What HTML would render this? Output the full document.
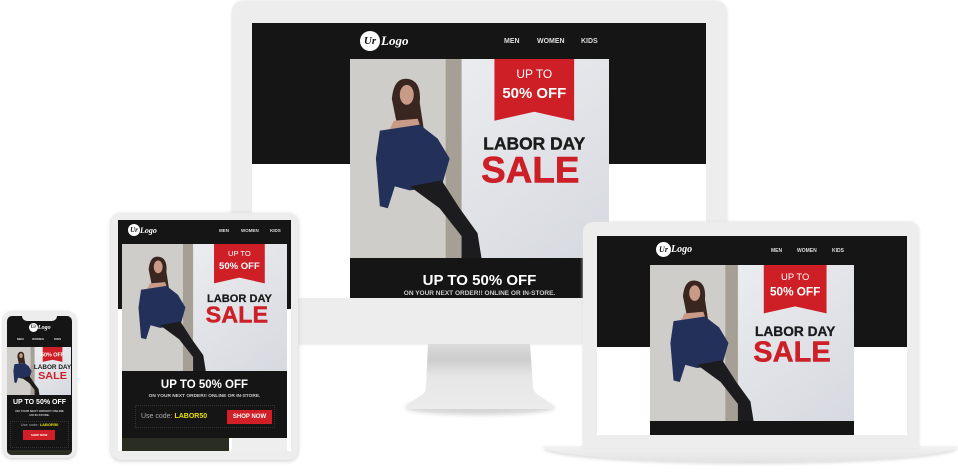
<!DOCTYPE html>
<html><head><meta charset="utf-8"><style>
*{margin:0;padding:0;box-sizing:border-box}
body{width:958px;height:474px;background:#fff;position:relative;overflow:hidden;font-family:"Liberation Sans",sans-serif}
.a{position:absolute}
.bz{background:#ededed;border-radius:10px}
.blk{background:#151515}
.nav{position:absolute;color:#ddd;font-weight:bold;white-space:nowrap}
.logo{position:absolute;display:flex;align-items:center}
.logo .c{background:#fff;border-radius:50%;color:#111;font-weight:bold;font-style:italic;display:flex;align-items:center;justify-content:center;font-family:"Liberation Serif",serif}
.logo .t{color:#fff;font-style:italic;font-family:"Liberation Serif",serif;font-weight:bold}
.ct{position:absolute;text-align:center;color:#fff;font-weight:bold;white-space:nowrap}
svg{display:block;position:absolute}
</style></head><body>

<!-- MONITOR -->
<div class="a" style="left:405px;top:400px;width:150px;height:15px;border-radius:50%;background:#d6d6d6;filter:blur(2px)"></div>
<svg style="left:400px;top:340px" width="160" height="75" viewBox="0 0 160 75">
<defs><linearGradient id="st" x1="0" y1="0" x2="0" y2="1"><stop offset="0" stop-color="#dcdcdc"/><stop offset=".25" stop-color="#cdcdcd"/><stop offset=".5" stop-color="#e6e6e6"/><stop offset="1" stop-color="#ececec"/></linearGradient></defs>
<path d="M28 3 L130 3 L133 47 Q134 53 140 56 L150 63 Q155 67 150 69 L10 69 Q4 67 9 63 L20 56 Q26 53 26 47 Z" fill="url(#st)"/>
</svg>
<div class="a bz" style="left:232px;top:1px;width:495px;height:343px;border-radius:12px;box-shadow:0 0 3px #ddd"></div>
<div class="a" style="left:252px;top:23px;width:454px;height:275px;background:#fff"></div>
<div class="a blk" style="left:252px;top:23px;width:454px;height:141px"></div>
<div class="logo" style="left:360px;top:31px"><div class="c" style="width:20px;height:20px;font-size:11px">Ur</div><div class="t" style="font-size:13px;margin-left:1px">Logo</div></div>
<div class="nav" style="left:504px;top:38px;font-size:7px">MEN</div>
<div class="nav" style="left:537px;top:38px;font-size:7px">WOMEN</div>
<div class="nav" style="left:581px;top:38px;font-size:7px">KIDS</div>
<svg style="left:350px;top:59px" width="259" height="199" viewBox="0 0 260 200" preserveAspectRatio="none">
<defs><linearGradient id="rg" x1="0" y1="0" x2="1" y2="1"><stop offset="0" stop-color="#f0f1f4"/><stop offset="1" stop-color="#d6d9df"/></linearGradient></defs>
<rect width="260" height="200" fill="url(#rg)"/><rect width="112" height="200" fill="#cfcdc9"/><rect x="96" width="16" height="200" fill="#a59f96"/>
<path d="M42 40 Q44 18 58 20 Q72 22 70 44 L74 70 L62 66 L48 70 Z" fill="#3a2620"/><ellipse cx="57" cy="36" rx="7" ry="10" fill="#c99a86"/>
<polygon points="44,62 68,60 72,72 38,74" fill="#c99a86"/>
<polygon points="30,72 70,66 88,80 100,100 92,128 60,132 45,128 38,150 30,148 26,100" fill="#23305a"/>
<polygon points="60,128 92,122 110,150 128,175 132,200 112,200 112,178 90,150" fill="#1c1c1f"/>
<polygon points="145,0 225,0 225,62 185,53 145,62" fill="#cf1f26"/>
<text x="185" y="19" font-size="12" fill="#fff" text-anchor="middle" font-family="Liberation Sans Narrow,Liberation Sans,sans-serif">UP TO</text>
<text x="185" y="39" font-size="15" font-weight="bold" fill="#fff" text-anchor="middle" font-family="Liberation Sans Narrow,Liberation Sans,sans-serif">50% OFF</text>
<text x="185" y="91" font-size="17.5" font-weight="bold" fill="#1b1b1b" text-anchor="middle" stroke="#1b1b1b" stroke-width=".4">LABOR DAY</text>
<text x="181" y="124" font-size="37" font-weight="bold" fill="#cc1f27" text-anchor="middle" stroke="#cc1f27" stroke-width=".6">SALE</text>
</svg>
<div class="a blk" style="left:350px;top:258px;width:259px;height:40px"></div>
<div class="ct" style="left:350px;width:259px;top:272px;font-size:15px">UP TO 50% OFF</div>
<div class="ct" style="left:350px;width:259px;top:290px;font-size:6.5px;color:#ccc">ON YOUR NEXT ORDER!! ONLINE OR IN-STORE.</div>

<!-- TABLET -->
<div class="a bz" style="left:111px;top:213px;width:187px;height:247px;box-shadow:0 1px 4px #ccc"></div>
<div class="a" style="left:118px;top:220px;width:173px;height:231px;background:#fff"></div>
<div class="a blk" style="left:118px;top:220px;width:173px;height:89px"></div>
<div class="logo" style="left:128px;top:224px"><div class="c" style="width:12px;height:12px;font-size:7px">Ur</div><div class="t" style="font-size:8px">Logo</div></div>
<div class="nav" style="left:219px;top:228px;font-size:4.5px">MEN</div>
<div class="nav" style="left:241px;top:228px;font-size:4.5px">WOMEN</div>
<div class="nav" style="left:270px;top:228px;font-size:4.5px">KIDS</div>
<svg style="left:122px;top:244px" width="165" height="127" viewBox="0 0 260 200" preserveAspectRatio="none">
<rect width="260" height="200" fill="url(#rg)"/><rect width="112" height="200" fill="#cfcdc9"/><rect x="96" width="16" height="200" fill="#a59f96"/>
<path d="M42 40 Q44 18 58 20 Q72 22 70 44 L74 70 L62 66 L48 70 Z" fill="#3a2620"/><ellipse cx="57" cy="36" rx="7" ry="10" fill="#c99a86"/>
<polygon points="44,62 68,60 72,72 38,74" fill="#c99a86"/>
<polygon points="30,72 70,66 88,80 100,100 92,128 60,132 45,128 38,150 30,148 26,100" fill="#23305a"/>
<polygon points="60,128 92,122 110,150 128,175 132,200 112,200 112,178 90,150" fill="#1c1c1f"/>
<polygon points="145,0 225,0 225,62 185,53 145,62" fill="#cf1f26"/>
<text x="185" y="19" font-size="12" fill="#fff" text-anchor="middle" font-family="Liberation Sans Narrow,Liberation Sans,sans-serif">UP TO</text>
<text x="185" y="39" font-size="15" font-weight="bold" fill="#fff" text-anchor="middle" font-family="Liberation Sans Narrow,Liberation Sans,sans-serif">50% OFF</text>
<text x="185" y="91" font-size="17.5" font-weight="bold" fill="#1b1b1b" text-anchor="middle" stroke="#1b1b1b" stroke-width=".4">LABOR DAY</text>
<text x="181" y="124" font-size="37" font-weight="bold" fill="#cc1f27" text-anchor="middle" stroke="#cc1f27" stroke-width=".6">SALE</text>
</svg>
<div class="a blk" style="left:122px;top:371px;width:165px;height:67px"></div>
<div class="ct" style="left:122px;width:165px;top:379px;font-size:11.5px">UP TO 50% OFF</div>
<div class="ct" style="left:122px;width:165px;top:394px;font-size:4.8px;color:#ccc">ON YOUR NEXT ORDER!! ONLINE OR IN-STORE.</div>
<div class="a" style="left:135px;top:405px;width:140px;height:23px;border:1px dotted #333"></div>
<div class="a" style="left:141px;top:413px;font-size:7px;color:#aaa;white-space:nowrap">Use code: <b style="color:#e8e000">LABOR50</b></div>
<div class="a" style="left:227px;top:410px;width:45px;height:14px;background:#d21f27;color:#fff;font-size:6px;font-weight:bold;text-align:center;line-height:14px">SHOP NOW</div>
<div class="a" style="left:122px;top:438px;width:107px;height:13px;background:#2a2d22"></div>
<div class="a" style="left:232px;top:438px;width:55px;height:13px;background:#eee"></div>

<!-- PHONE -->
<div class="a bz" style="left:3px;top:311px;width:73px;height:147px;border-radius:9px;box-shadow:0 1px 3px #ccc"></div>
<div class="a blk" style="left:7px;top:316px;width:65px;height:139px;border-radius:5px"></div>
<div class="a" style="left:22px;top:316px;width:35px;height:5px;background:#ededed;border-radius:0 0 5px 5px"></div>
<div class="logo" style="left:29px;top:323px"><div class="c" style="width:9px;height:9px;font-size:5px">Ur</div><div class="t" style="font-size:6px">Logo</div></div>
<div class="nav" style="left:17px;top:337px;font-size:3px">MEN</div>
<div class="nav" style="left:32px;top:337px;font-size:3px">WOMEN</div>
<div class="nav" style="left:54px;top:337px;font-size:3px">KIDS</div>
<svg style="left:7px;top:347px" width="64" height="48" viewBox="0 0 260 200" preserveAspectRatio="none">
<rect width="260" height="200" fill="url(#rg)"/><rect width="112" height="200" fill="#cfcdc9"/><rect x="96" width="16" height="200" fill="#a59f96"/>
<path d="M42 40 Q44 18 58 20 Q72 22 70 44 L74 70 L62 66 L48 70 Z" fill="#3a2620"/><ellipse cx="57" cy="36" rx="7" ry="10" fill="#c99a86"/>
<polygon points="30,72 70,66 88,80 100,100 92,128 60,132 45,128 38,150 30,148 26,100" fill="#23305a"/>
<polygon points="60,128 92,122 110,150 128,175 132,200 112,200 112,178 90,150" fill="#1c1c1f"/>
<polygon points="145,0 225,0 225,62 185,53 145,62" fill="#cf1f26"/>
<text x="185" y="39" font-size="22" font-weight="bold" fill="#fff" text-anchor="middle">50% OFF</text>
<text x="185" y="91" font-size="26" font-weight="bold" fill="#1b1b1b" text-anchor="middle">LABOR DAY</text>
<text x="185" y="134" font-size="44" font-weight="bold" fill="#cc1f27" text-anchor="middle">SALE</text>
</svg>
<div class="ct" style="left:7px;width:65px;top:399px;font-size:7px">UP TO 50% OFF</div>
<div class="ct" style="left:7px;width:65px;top:409px;font-size:3px;color:#ccc;line-height:4px">ON YOUR NEXT ORDER!! ONLINE<br>OR IN-STORE.</div>
<div class="a" style="left:10px;top:421px;width:59px;height:27px;border:1px dotted #333"></div>
<div class="ct" style="left:7px;width:65px;top:422px;font-size:4px;color:#aaa;font-weight:normal">Use code: <b style="color:#e8e000">LABOR50</b></div>
<div class="a" style="left:23px;top:430px;width:32px;height:10px;background:#d21f27;color:#fff;font-size:3px;font-weight:bold;text-align:center;line-height:10px">SHOP NOW</div>
<div class="a" style="left:7px;top:450px;width:65px;height:5px;background:#2a2d22;border-radius:0 0 5px 5px"></div>

<!-- LAPTOP -->
<div class="a" style="left:543px;top:446px;width:415px;height:16px;background:linear-gradient(#f3f3f3,#e2e2e2);border-radius:0 0 50% 50%/0 0 100% 100%;box-shadow:0 2px 3px #ddd"></div>
<div class="a bz" style="left:583px;top:222px;width:336px;height:226px;border-radius:10px 10px 0 0;box-shadow:0 0 3px #ddd"></div>
<div class="a" style="left:597px;top:236px;width:310px;height:199px;background:#fff"></div>
<div class="a blk" style="left:597px;top:236px;width:310px;height:111px"></div>
<div class="logo" style="left:656px;top:242px"><div class="c" style="width:15px;height:15px;font-size:8px">Ur</div><div class="t" style="font-size:10px">Logo</div></div>
<div class="nav" style="left:771px;top:248px;font-size:5px">MEN</div>
<div class="nav" style="left:797px;top:248px;font-size:5px">WOMEN</div>
<div class="nav" style="left:832px;top:248px;font-size:5px">KIDS</div>
<svg style="left:650px;top:265px" width="204" height="156" viewBox="0 0 260 200" preserveAspectRatio="none">
<rect width="260" height="200" fill="url(#rg)"/><rect width="112" height="200" fill="#cfcdc9"/><rect x="96" width="16" height="200" fill="#a59f96"/>
<path d="M42 40 Q44 18 58 20 Q72 22 70 44 L74 70 L62 66 L48 70 Z" fill="#3a2620"/><ellipse cx="57" cy="36" rx="7" ry="10" fill="#c99a86"/>
<polygon points="44,62 68,60 72,72 38,74" fill="#c99a86"/>
<polygon points="30,72 70,66 88,80 100,100 92,128 60,132 45,128 38,150 30,148 26,100" fill="#23305a"/>
<polygon points="60,128 92,122 110,150 128,175 132,200 112,200 112,178 90,150" fill="#1c1c1f"/>
<polygon points="145,0 225,0 225,62 185,53 145,62" fill="#cf1f26"/>
<text x="185" y="19" font-size="12" fill="#fff" text-anchor="middle" font-family="Liberation Sans Narrow,Liberation Sans,sans-serif">UP TO</text>
<text x="185" y="39" font-size="15" font-weight="bold" fill="#fff" text-anchor="middle" font-family="Liberation Sans Narrow,Liberation Sans,sans-serif">50% OFF</text>
<text x="185" y="91" font-size="17.5" font-weight="bold" fill="#1b1b1b" text-anchor="middle" stroke="#1b1b1b" stroke-width=".4">LABOR DAY</text>
<text x="181" y="124" font-size="37" font-weight="bold" fill="#cc1f27" text-anchor="middle" stroke="#cc1f27" stroke-width=".6">SALE</text>
</svg>
<div class="a blk" style="left:650px;top:421px;width:204px;height:14px"></div>

</body></html>
